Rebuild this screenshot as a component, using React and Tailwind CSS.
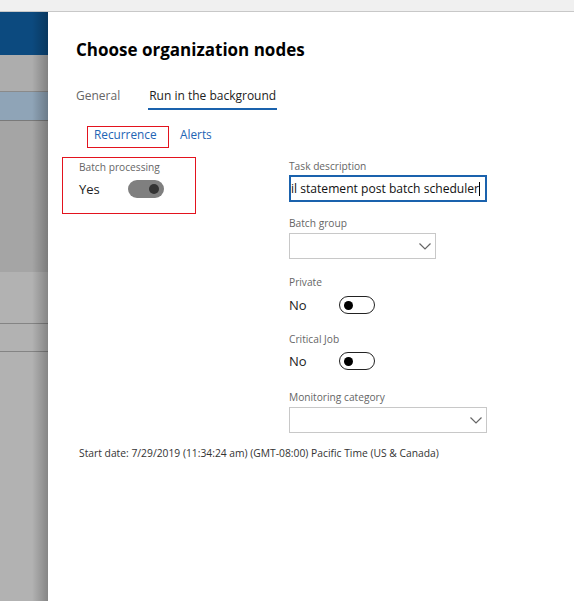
import React from 'react'

const font = { fontFamily: '"Open Sans", "Noto Sans", Arial, sans-serif' }

function Chevron() {
  return (
    <svg width="12" height="7" viewBox="0 0 12 7" fill="none">
      <path d="M0.5 0.5 L6 6 L11.5 0.5" stroke="#666" strokeWidth="1.2" />
    </svg>
  )
}

function Toggle({ on }) {
  if (on) {
    return (
      <div className="w-[36px] h-[18px] rounded-full bg-[#7f7f7f] flex items-center justify-end pr-[5px]">
        <div className="w-[10px] h-[10px] rounded-full bg-[#333]" />
      </div>
    )
  }
  return (
    <div className="w-[36px] h-[18px] rounded-full border border-[#222] flex items-center pl-[4px]">
      <div className="w-[9px] h-[9px] rounded-full bg-black" />
    </div>
  )
}

function Label({ children, className }) {
  return (
    <div className={'text-[10.2px] leading-[16px] text-[#666] ' + (className || '')}>{children}</div>
  )
}

function NoRow({ className }) {
  return (
    <div className={'flex items-center h-[18px] ' + (className || '')}>
      <span className="w-[50px] text-[13px] leading-[18px] text-[#222]">No</span>
      <Toggle on={false} />
    </div>
  )
}

export default function App() {
  return (
    <div className="w-[574px] h-[601px] overflow-hidden bg-white flex flex-col" style={font}>
      <div className="h-[12px] shrink-0 bg-[#f0f0f0] border-b border-[#c8c8c8]" />
      <div className="flex flex-1 min-h-0">
        <div className="relative w-[48px] shrink-0 flex flex-col">
          <div className="h-[43px] bg-[#0c4a7f]" />
          <div className="h-[37px] bg-[#adadad] border-b border-[#8a8a8a]" />
          <div className="h-[29px] bg-[#8fa4b7] border-b border-[#7a7a7a]" />
          <div className="h-[151px] bg-[#a5a5a5]" />
          <div className="h-[52px] bg-[#b2b2b2] border-b border-[#848484]" />
          <div className="h-[28px] bg-[#b2b2b2] border-b border-[#848484]" />
          <div className="flex-1 bg-[#b2b2b2]" />
          <div className="absolute inset-y-0 right-0 w-[16px] bg-linear-to-r from-transparent to-black/25" />
        </div>

        <div className="flex-1 bg-white px-[28px]">
          <h1 className="mt-[26px] text-[17px] leading-[24px] font-bold text-black">
            Choose organization nodes
          </h1>

          <div className="mt-[24px] flex items-start text-[12px] leading-[20px]">
            <div className="text-[#666]">General</div>
            <div className="ml-[28px] px-[1px] pb-[2px] border-b-2 border-[#1a62ad] text-[#222]">
              Run in the background
            </div>
          </div>

          <div className="mt-[16px] ml-[11px] flex items-start text-[11.8px] text-[#2264b4]">
            <div className="w-[82px] h-[22px] border border-[#e3131e] pl-[6px] leading-[15px]">
              Recurrence
            </div>
            <div className="ml-[11px] pt-[1px] leading-[15px]">Alerts</div>
          </div>

          <div className="mt-[9px] -ml-[14px] flex items-start">
            <div className="w-[134px] border border-[#e3131e] pl-[16px] pt-[1px] pb-[15px]">
              <Label>Batch processing</Label>
              <div className="mt-[5px] flex items-center h-[18px]">
                <span className="w-[49px] text-[13px] leading-[18px] text-[#222]">Yes</span>
                <Toggle on={true} />
              </div>
            </div>

            <div className="ml-[93px] pt-[1px] flex flex-col">
              <Label>Task description</Label>
              <div className="mt-[1px] w-[198px] h-[27px] border-2 border-[#1a62ad] overflow-hidden flex items-center">
                <span className="whitespace-nowrap text-[12.1px] leading-[23px] text-[#111]">
                  il statement post batch scheduler
                </span>
                <span className="w-[1px] h-[14px] bg-black" />
              </div>

              <Label className="mt-[13px]">Batch group</Label>
              <div className="mt-[2px] w-[147px] h-[26px] border border-[#c8c8c8] flex items-center justify-end pr-[4px]">
                <Chevron />
              </div>

              <Label className="mt-[15px]">Private</Label>
              <NoRow className="mt-[6px]" />

              <Label className="mt-[17px]">Critical Job</Label>
              <NoRow className="mt-[5px]" />

              <Label className="mt-[19px]">Monitoring category</Label>
              <div className="mt-[2px] w-[198px] h-[26px] border border-[#c8c8c8] flex items-center justify-end pr-[4px]">
                <Chevron />
              </div>
            </div>
          </div>

          <div className="mt-[12px] ml-[3px] text-[10.3px] leading-[16px] text-[#333]">
            Start date: 7/29/2019 (11:34:24 am) (GMT-08:00) Pacific Time (US &amp; Canada)
          </div>
        </div>
      </div>
    </div>
  )
}
